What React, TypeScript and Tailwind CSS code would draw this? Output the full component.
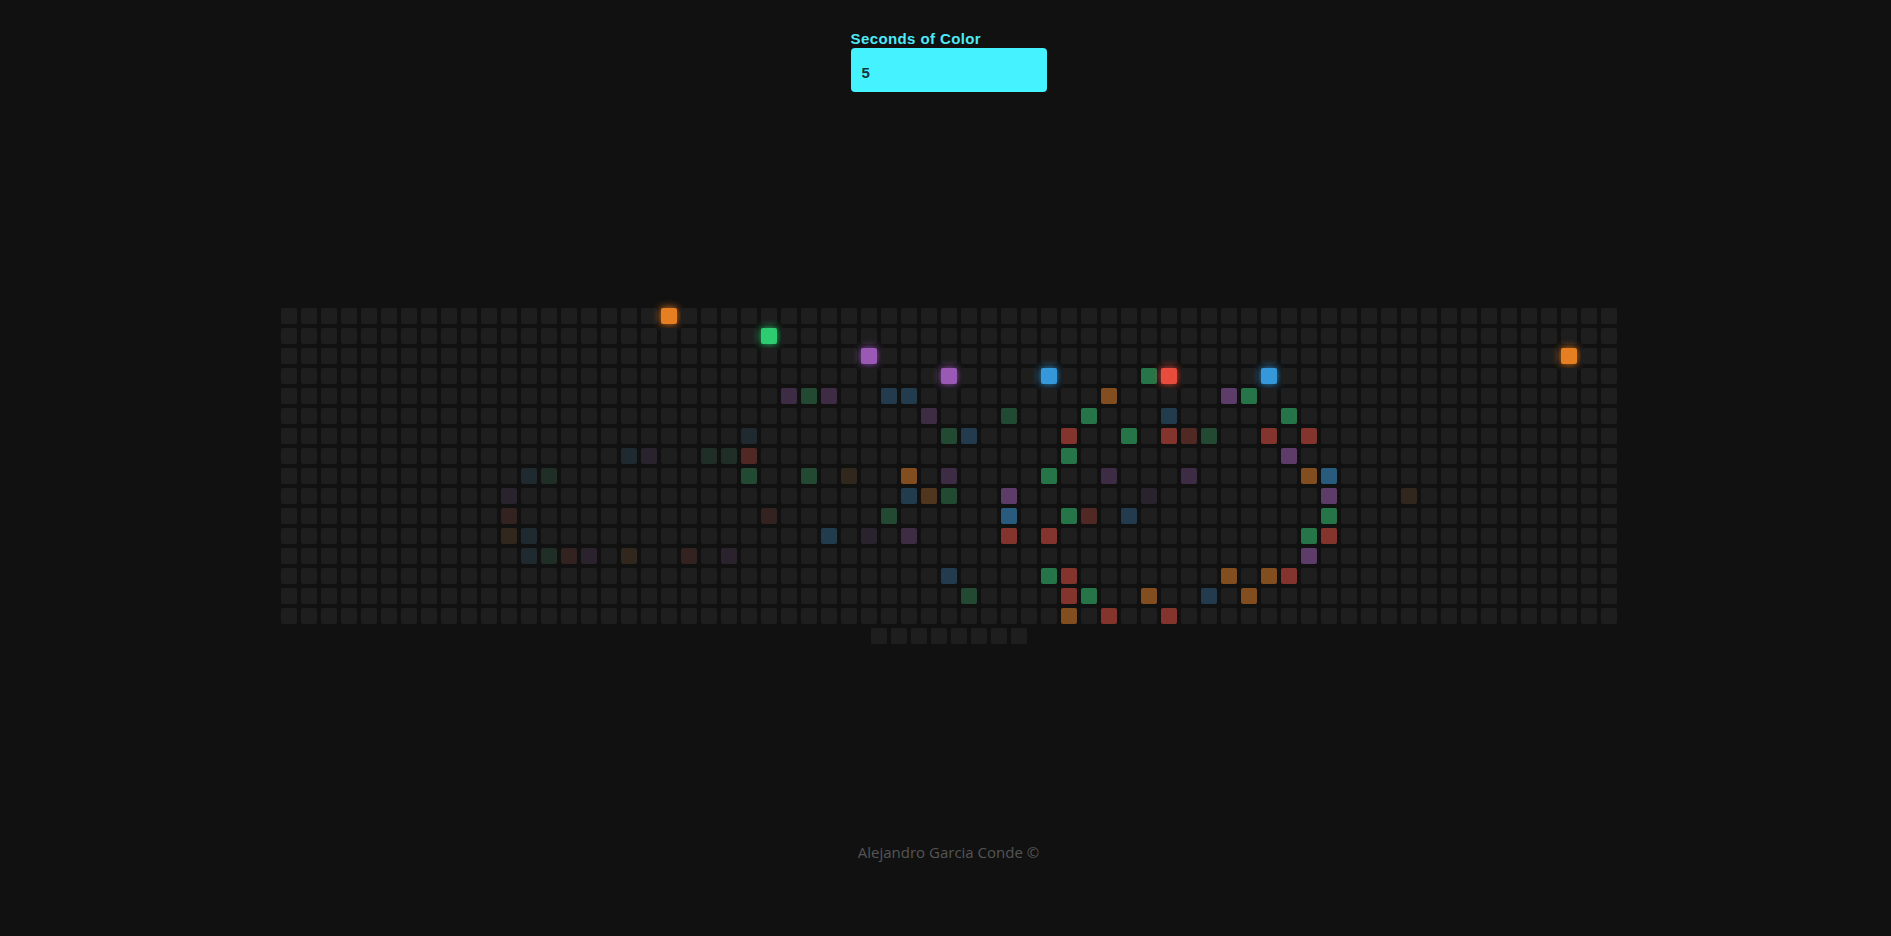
import React from "react";

const COLS = 67;
const TOTAL = 1080;

// hue -> classes per intensity level (1 faint .. 4 lit)
const shades: Record<string, string[]> = {
  o: ["", "bg-[#e67e22]/10", "bg-[#e67e22]/25", "bg-[#e67e22]/50", "bg-[#e67e22] shadow-[0_0_8px_#e67e22]"],
  g: ["", "bg-[#2ecc71]/10", "bg-[#2ecc71]/25", "bg-[#2ecc71]/50", "bg-[#2ecc71] shadow-[0_0_8px_#2ecc71]"],
  p: ["", "bg-[#9b59b6]/10", "bg-[#9b59b6]/25", "bg-[#9b59b6]/50", "bg-[#9b59b6] shadow-[0_0_8px_#9b59b6]"],
  b: ["", "bg-[#3498db]/10", "bg-[#3498db]/25", "bg-[#3498db]/50", "bg-[#3498db] shadow-[0_0_8px_#3498db]"],
  r: ["", "bg-[#e74c3c]/10", "bg-[#e74c3c]/25", "bg-[#e74c3c]/50", "bg-[#e74c3c] shadow-[0_0_8px_#e74c3c]"],
};

// row,col,hue,level
const lit = `
0,19,o,4 1,24,g,4 2,29,p,4 3,33,p,4 3,38,b,4 3,44,r,4 3,49,b,4 2,64,o,4
3,43,g,3 4,41,o,3 4,47,p,3 4,48,g,3 5,40,g,3 5,50,g,3 6,39,r,3 6,42,g,3
6,44,r,3 6,49,r,3 6,51,r,3 7,39,g,3 7,50,p,3 8,38,g,3 8,51,o,3 8,52,b,3
9,36,p,3 9,52,p,3 10,36,b,3 10,39,g,3 11,36,r,3 11,38,r,3 13,38,g,3 13,39,r,3
14,39,r,3 15,39,o,3 13,47,o,3 13,49,o,3 13,50,r,3 14,40,g,3 14,43,o,3 14,48,o,3
15,41,r,3 15,44,r,3 11,52,r,3 10,52,g,3 11,51,g,3 12,51,p,3 8,31,o,3
4,25,p,2 4,26,g,2 4,27,p,2 4,30,b,2 4,31,b,2 5,32,p,2 5,36,g,2 5,44,b,2
6,33,g,2 6,34,b,2 6,45,r,2 6,46,g,2 8,26,g,2 8,33,p,2 8,41,p,2 9,31,b,2
9,32,o,2 9,33,g,2 10,30,g,2 11,27,b,2 11,31,p,2 13,33,b,2 14,34,g,2 14,46,b,2
10,40,r,2 10,42,b,2 8,23,g,2 8,45,p,2 7,23,r,2
6,23,b,1 7,17,b,1 7,18,p,1 7,21,g,1 7,22,g,1 8,12,b,1 8,13,g,1 9,11,p,1
8,28,o,1 10,11,r,1 10,24,r,1 11,11,o,1 11,12,b,1 12,12,b,1 12,13,g,1 12,14,r,1
12,15,p,1 12,17,o,1 12,20,r,1 12,22,p,1 11,29,p,1 9,43,p,1 9,56,o,1
`;

const cellMap: Record<number, string> = {};
lit
  .trim()
  .split(/\s+/)
  .forEach((s) => {
    const [r, c, h, l] = s.split(",");
    cellMap[Number(r) * COLS + Number(c)] = shades[h][Number(l)];
  });

const Cell = ({ cls }: { cls?: string }) => (
  <div className="w-4 h-4 m-[2px] rounded-[2px] bg-[#1e1e1e]">
    {cls && <div className={`w-full h-full rounded-[2px] ${cls}`} />}
  </div>
);

export default function App() {
  return (
    <div className="min-h-screen bg-[#111111] flex flex-col items-center pl-[6px] pt-[30px] font-['Liberation_Sans',Arial,sans-serif]">
      <div className="flex flex-col w-[196px]">
        <label className="text-[15px] leading-[17px] font-bold text-[#4fe9f7] tracking-[0.4px]">
          Seconds of Color
        </label>
        <div className="mt-[1px] h-[44px] rounded-[4px] bg-[#45f2ff] flex items-center px-[11px] pt-[6px]">
          <span className="text-[15px] font-bold text-[#17343a]">5</span>
        </div>
      </div>

      <div className="mt-[214px] w-[1340px] flex flex-wrap justify-center">
        {Array.from({ length: TOTAL }, (_, i) => (
          <Cell key={i} cls={cellMap[i]} />
        ))}
      </div>

      <div className="mt-[196px] text-[15px] leading-[20px] text-[#555555] font-['Open_Sans',sans-serif]">
        Alejandro Garcia Conde ©
      </div>
    </div>
  );
}
